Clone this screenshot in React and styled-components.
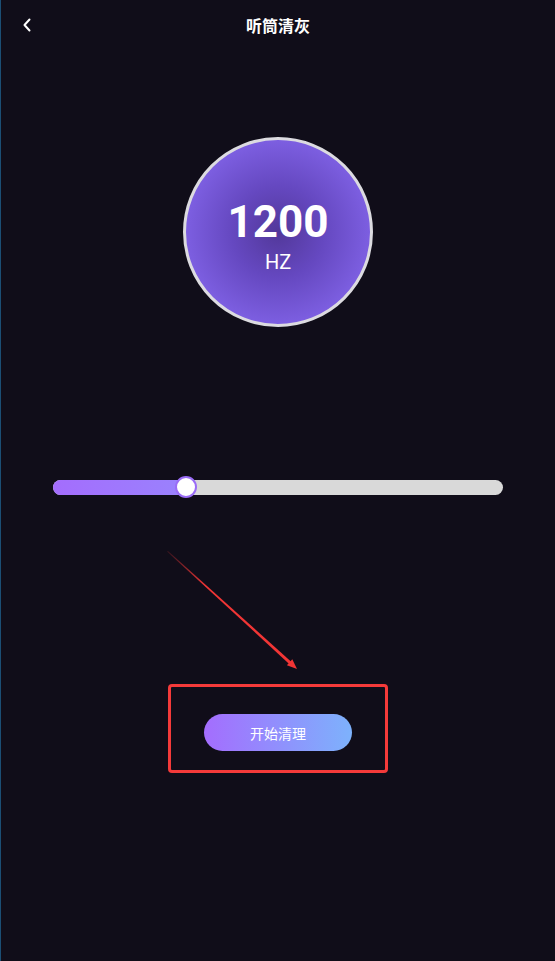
import React, { useState } from 'react'
import styled, { createGlobalStyle } from 'styled-components'

const GlobalStyle = createGlobalStyle`
  html, body {
    margin: 0;
    padding: 0;
    background: #100d19;
  }
  body {
    font-family: Roboto, "Noto Sans CJK SC", sans-serif;
  }
`;

const Page = styled.div`
  width: 555px;
  height: 961px;
  box-sizing: border-box;
  background: #100d19;
  border-left: 1px solid #1b4e74;
  display: flex;
  flex-direction: column;
  align-items: center;
  overflow: hidden;
`;

const Header = styled.div`
  width: 100%;
  height: 50px;
  display: grid;
  grid-template-columns: 60px 1fr 60px;
  align-items: center;
`;

const Back = styled.button`
  background: none;
  border: none;
  padding: 0 0 0 21px;
  display: flex;
  align-items: center;
  color: #fff;
  cursor: pointer;
`;

const Title = styled.h1`
  margin: 0;
  text-align: center;
  color: #fff;
  font-size: 16px;
  font-weight: 700;
  font-family: "Noto Sans CJK SC", sans-serif;
`;

const Dial = styled.div`
  margin-top: 87px;
  width: 190px;
  height: 190px;
  box-sizing: border-box;
  border-radius: 50%;
  border: 3px solid #dcdbe0;
  background: radial-gradient(circle at 50% 50%, #52389a 0%, #6548c0 35%, #7c5ee0 70%, #8a6af0 100%);
  display: flex;
  flex-direction: column;
  align-items: center;
  justify-content: center;
  color: #fff;
`;

const Freq = styled.div`
  font-family: Roboto, sans-serif;
  font-weight: 700;
  font-size: 44px;
  line-height: 44px;
  margin-top: 8px;
`;

const Unit = styled.div`
  font-family: Roboto, sans-serif;
  font-size: 20px;
  line-height: 20px;
  margin-top: 8px;
`;

const SliderWrap = styled.div`
  margin-top: 149px;
  width: 450px;
  height: 22px;
  position: relative;
  display: flex;
  align-items: center;
`;

const Track = styled.div`
  width: 100%;
  height: 15px;
  border-radius: 8px;
  background: #d9d9d9;
  overflow: hidden;
`;

const Fill = styled.div`
  height: 100%;
  background: linear-gradient(90deg, #a46dfd, #9a82fd);
`;

const Thumb = styled.div`
  position: absolute;
  top: 0;
  width: 22px;
  height: 22px;
  box-sizing: border-box;
  margin-left: -11px;
  border-radius: 50%;
  background: #fff;
  border: 2px solid #9a6cf6;
`;

const ArrowArea = styled.svg`
  display: block;
  width: 555px;
  height: 186px;
`;

const Highlight = styled.div`
  width: 220px;
  box-sizing: border-box;
  border: 3px solid #f43a3a;
  border-radius: 4px;
  padding: 27px 0 19px;
  display: flex;
  justify-content: center;
`;

const StartButton = styled.button`
  width: 148px;
  height: 37px;
  border: none;
  border-radius: 19px;
  background: linear-gradient(90deg, #a46dfe, #7db2fc);
  color: #fff;
  font-size: 14px;
  font-family: "Noto Sans CJK SC", sans-serif;
  cursor: pointer;
`;

function App() {
  const [percent] = useState(29.6)

  return (
    <Page>
      <GlobalStyle />
      <Header>
        <Back aria-label="back">
          <svg width="10" height="16" viewBox="0 0 10 16">
            <path d="M7.5 2.5 L2.5 8 L7.5 13.5" fill="none" stroke="#fff" strokeWidth="2" strokeLinecap="round" strokeLinejoin="round" />
          </svg>
        </Back>
        <Title>听筒清灰</Title>
        <div />
      </Header>

      <Dial>
        <Freq>1200</Freq>
        <Unit>HZ</Unit>
      </Dial>

      <SliderWrap>
        <Track>
          <Fill style={{ width: `${percent}%` }} />
        </Track>
        <Thumb style={{ left: `${percent}%` }} />
      </SliderWrap>

      <ArrowArea viewBox="0 0 555 186">
        <defs>
          <linearGradient id="arrowLine" x1="166" y1="53" x2="296" y2="171" gradientUnits="userSpaceOnUse">
            <stop offset="0" stopColor="#f23535" stopOpacity="0.15" />
            <stop offset="0.3" stopColor="#f23535" />
            <stop offset="1" stopColor="#f23535" />
          </linearGradient>
        </defs>
        <polygon points="166,53.5 167,53 290.2,163.7 288.2,165.9" fill="url(#arrowLine)" />
        <polygon points="296,171 285.9,167.3 291.3,161.3" fill="#f23535" />
      </ArrowArea>

      <Highlight>
        <StartButton>开始清理</StartButton>
      </Highlight>
    </Page>
  )
}

export default App
